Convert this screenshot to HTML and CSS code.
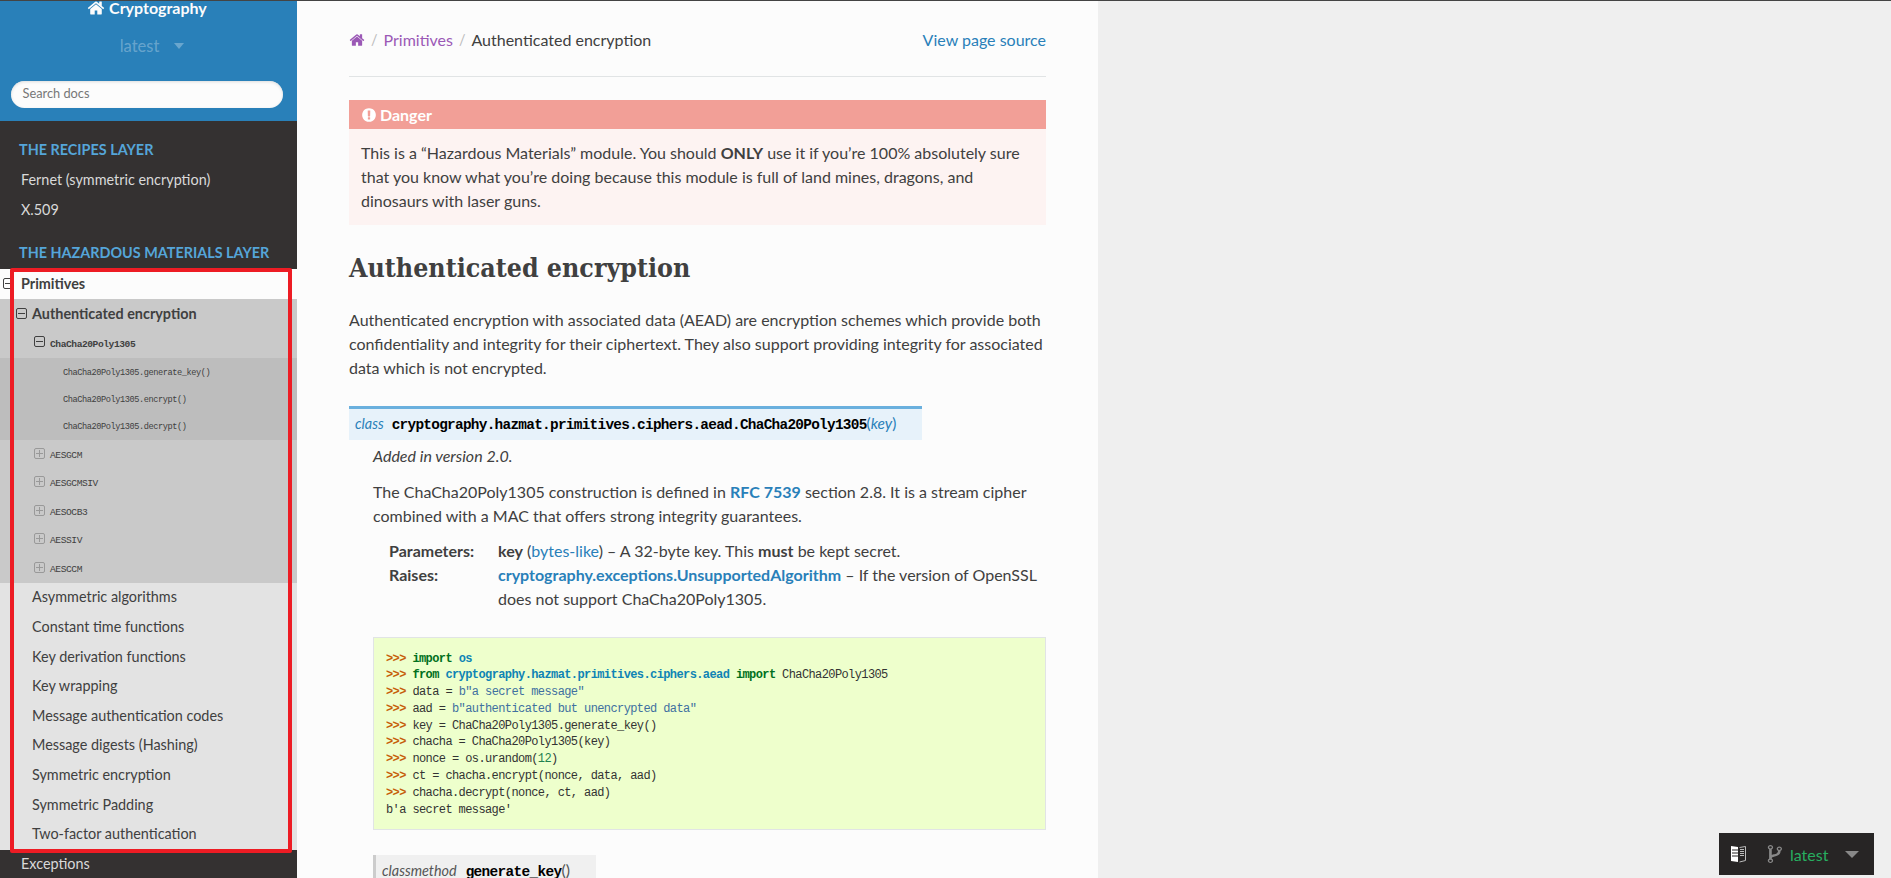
FILE: index.html
```html
<!DOCTYPE html>
<html lang="en">
<head>
<meta charset="utf-8">
<title>Authenticated encryption</title>
<link rel="stylesheet" href="styles.css">
</head>
<body>
<div class="page">
  <nav class="sidebar">
    <div class="side-top">
      <div class="brand"><svg class="home-w" viewBox="0 0 1792 1792"><path d="M1472 992v480q0 26-19 45t-45 19h-384v-384h-256v384h-384q-26 0-45-19t-19-45v-480q0-1 .5-3t.5-3l575-474 575 474q1 2 1 6zm223-69l-62 74q-8 9-21 11h-3q-13 0-21-7l-692-577-692 577q-12 8-24 7-13-2-21-11l-62-74q-8-10-7-23.500t11-21.500l719-599q32-26 76-26t76 26l244 204v-195q0-14 9-23t23-9h192q14 0 23 9t9 23v408l219 182q10 8 11 21.500t-7 23.500z"/></svg> Cryptography</div>
      <div class="ver"><span>latest</span><i class="caret"></i></div>
      <div class="search">Search docs</div>
    </div>
    <div class="cap cap-first">THE RECIPES LAYER</div>
    <a class="l1">Fernet (symmetric encryption)</a>
    <a class="l1">X.509</a>
    <div class="cap cap-second">THE HAZARDOUS MATERIALS LAYER</div>
    <div class="l1 cur"><i class="tog tog-p"></i>Primitives</div>
    <div class="l2 on"><i class="tog"></i>Authenticated encryption</div>
    <div class="l3 on3"><i class="tog"></i>ChaCha20Poly1305</div>
    <div class="l4s">
      <div class="l4">ChaCha20Poly1305.generate_key()</div>
      <div class="l4">ChaCha20Poly1305.encrypt()</div>
      <div class="l4">ChaCha20Poly1305.decrypt()</div>
    </div>
    <div class="l3s">
      <div class="l3"><i class="tog plus"></i>AESGCM</div>
      <div class="l3"><i class="tog plus"></i>AESGCMSIV</div>
      <div class="l3"><i class="tog plus"></i>AESOCB3</div>
      <div class="l3"><i class="tog plus"></i>AESSIV</div>
      <div class="l3"><i class="tog plus"></i>AESCCM</div>
    </div>
    <div class="l2s">
      <div class="l2">Asymmetric algorithms</div>
      <div class="l2">Constant time functions</div>
      <div class="l2">Key derivation functions</div>
      <div class="l2">Key wrapping</div>
      <div class="l2">Message authentication codes</div>
      <div class="l2">Message digests (Hashing)</div>
      <div class="l2">Symmetric encryption</div>
      <div class="l2">Symmetric Padding</div>
      <div class="l2">Two-factor authentication</div>
    </div>
    <a class="l1">Exceptions</a>
    <div class="mark"></div>
  </nav>
  <main class="content">
    <div class="crumbs">
      <svg class="home-p" viewBox="0 0 1792 1792"><path d="M1472 992v480q0 26-19 45t-45 19h-384v-384h-256v384h-384q-26 0-45-19t-19-45v-480q0-1 .5-3t.5-3l575-474 575 474q1 2 1 6zm223-69l-62 74q-8 9-21 11h-3q-13 0-21-7l-692-577-692 577q-12 8-24 7-13-2-21-11l-62-74q-8-10-7-23.500t11-21.500l719-599q32-26 76-26t76 26l244 204v-195q0-14 9-23t23-9h192q14 0 23 9t9 23v408l219 182q10 8 11 21.500t-7 23.500z"/></svg>
      <span class="sep">/</span><a class="visited">Primitives</a><span class="sep">/</span><span>Authenticated encryption</span>
      <a class="src">View page source</a>
    </div>
    <hr class="rule">
    <div class="danger">
      <div class="danger-t"><svg class="warn" viewBox="0 0 1792 1792"><path d="M896 128q209 0 385.500 103t279.500 279.500 103 385.500-103 385.500-279.500 279.500-385.500 103-385.500-103-279.500-279.500-103-385.500 103-385.500 279.500-279.500 385.500-103zm128 1247v-190q0-14-9-23.500t-22-9.500h-192q-13 0-23 10t-10 23v190q0 13 10 23t23 10h192q13 0 22-9.500t9-23.500zm-2-344l18-621q0-12-10-18-10-8-24-8h-220q-14 0-24 8-10 6-10 18l17 621q0 10 10 17.500t24 7.500h185q14 0 23.500-7.500t10.500-17.500z"/></svg>Danger</div>
      <p class="danger-b">This is a “Hazardous Materials” module. You should <b>ONLY</b> use it if you’re 100% absolutely sure that you know what you’re doing because this module is full of land mines, dragons, and dinosaurs with laser guns.</p>
    </div>
    <h1 class="title">Authenticated encryption</h1>
    <p class="para">Authenticated encryption with associated data (AEAD) are encryption schemes which provide both confidentiality and integrity for their ciphertext. They also support providing integrity for associated data which is not encrypted.</p>
    <div class="sig"><em>class</em><b>cryptography.hazmat.primitives.ciphers.aead.ChaCha20Poly1305</b><span class="sig-a">(<em>key</em>)</span></div>
    <div class="body">
      <p class="added"><em>Added in version 2.0.</em></p>
      <p class="para2">The ChaCha20Poly1305 construction is defined in <a class="rfc">RFC 7539</a> section 2.8. It is a stream cipher combined with a MAC that offers strong integrity guarantees.</p>
      <div class="fields">
        <div class="dt">Parameters:</div>
        <div><b>key</b> (<a class="lnk">bytes-like</a>) – A 32-byte key. This <b>must</b> be kept secret.</div>
        <div class="dt">Raises:</div>
        <div><a class="lnk-b">cryptography.exceptions.UnsupportedAlgorithm</a> – If the version of OpenSSL does not support ChaCha20Poly1305.</div>
      </div>
      <pre class="code"><span class="gp">&gt;&gt;&gt; </span><span class="kn">import</span> <span class="nn">os</span>
<span class="gp">&gt;&gt;&gt; </span><span class="kn">from</span> <span class="nn">cryptography.hazmat.primitives.ciphers.aead</span> <span class="kn">import</span> ChaCha20Poly1305
<span class="gp">&gt;&gt;&gt; </span>data = <span class="s">b"a secret message"</span>
<span class="gp">&gt;&gt;&gt; </span>aad = <span class="s">b"authenticated but unencrypted data"</span>
<span class="gp">&gt;&gt;&gt; </span>key = ChaCha20Poly1305.generate_key()
<span class="gp">&gt;&gt;&gt; </span>chacha = ChaCha20Poly1305(key)
<span class="gp">&gt;&gt;&gt; </span>nonce = os.urandom(<span class="mi">12</span>)
<span class="gp">&gt;&gt;&gt; </span>ct = chacha.encrypt(nonce, data, aad)
<span class="gp">&gt;&gt;&gt; </span>chacha.decrypt(nonce, ct, aad)
b'a secret message'</pre>
      <div class="sig2"><em>classmethod</em><b>generate_key</b>()</div>
    </div>
  </main>
</div>
<div class="versions">
  <svg class="book" viewBox="0 0 15 18"><path fill="#fff" d="M0 1l7 1v15l-7-1z"/><path fill="none" stroke="#bbb" d="M8.500 2.500l6-1v14l-6 1.500"/><path stroke="#272525" d="M1 5h6M1 8h6M1 11h6"/><path stroke="#bbb" d="M9 4.500h4M9 6.500h4M9 8.500h4M9 10.500h4"/></svg>
  <svg class="fork" viewBox="256 128 1152 1536" preserveAspectRatio="none"><path d="M672 1472q0-40-28-68t-68-28-68 28-28 68 28 68 68 28 68-28 28-68zm0-1152q0-40-28-68t-68-28-68 28-28 68 28 68 68 28 68-28 28-68zm640 128q0-40-28-68t-68-28-68 28-28 68 28 68 68 28 68-28 28-68zm96 0q0 52-26 96.500t-70 69.500q-2 287-226 414-67 38-203 81-128 40-169.500 71t-41.500 100v26q44 25 70 69.500t26 96.500q0 80-56 136t-136 56-136-56-56-136q0-52 26-96.500t70-69.500v-820q-44-25-70-69.500t-26-96.500q0-80 56-136t136-56 136 56 56 136q0 52-26 96.500t-70 69.500v497q54-26 154-57 55-17 87.500-29.500t70.500-31 59-39.500 40.500-51 28-69.500 8.500-91.500q-44-25-70-69.500t-26-96.500q0-80 56-136t136-56 136 56 56 136z"/></svg>
  <span class="v-name">latest</span>
  <i class="v-caret"></i>
</div>
</body>
</html>
```
FILE: styles.css
```css
* { box-sizing: border-box; }
html, body { margin: 0; height: 100%; overflow: hidden; }
body { background: #efefef; font-family: Lato, sans-serif; font-size: 16px; color: #404040; border-top: 1px solid #444; }
a { text-decoration: none; }
.page { display: flex; height: 877px; width: 1098px; overflow: hidden; }

.sidebar { position: relative; width: 297px; flex: none; background: #343131; overflow: hidden; font-size: 14.4px; line-height: 31px; color: #d9d9d9; }
.side-top { background: #2980b9; height: 120px; text-align: center; display: flex; flex-direction: column; align-items: center; }
.brand { font-size: 16px; font-weight: 700; color: #fcfcfc; line-height: 8px; height: 17px; margin: -2px 0 0 -3px; }
.home-w { width: 18px; height: 18px; fill: #fcfcfc; vertical-align: -3px; }
.ver { margin-top: 18px; margin-left: 7px; line-height: 24px; font-size: 16.5px; color: rgba(255,255,255,.3); width: 100%; display: flex; justify-content: center; align-items: center; gap: 15px; }
.caret { width: 0; height: 0; border: 5px solid transparent; border-top: 6px solid rgba(255,255,255,.3); border-bottom: 0; }
.search { margin-top: 23px; width: 272px; margin-left: -4px; height: 27px; background: #fcfcfc; border-radius: 14px; text-align: left; padding-left: 12px; line-height: 25px; font-size: 12.8px; color: #777; box-shadow: inset 0 1px 3px #ddd; }
.cap { font-weight: 700; color: #55a5d9; font-size: 14.4px; padding-left: 19px; height: 29.5px; }
.cap-first { margin-top: 13px; }
.cap-second { margin-top: 13px; }
.l1 { display: block; padding-left: 21px; height: 30px; }
.cur { position: relative; background: #fcfcfc; color: #404040; font-weight: 700; height: 29.500px; margin-top: 3px; line-height: 29.500px; }
.tog { position: absolute; left: 16px; width: 11px; height: 11px; border: 1px solid #404040; border-radius: 2px; margin-top: 9px; }
.tog::before { content: ""; position: absolute; left: 1px; right: 1px; top: 4px; height: 1px; background: currentColor; }
.tog-p { left: 3px; top: 0; margin-top: 9px; }
.plus { border-color: #999; color: #999; }
.plus::after { content: ""; position: absolute; top: 1px; bottom: 1px; left: 4px; width: 1px; background: #999; }

.l2, .l3, .l4 { color: #404040; }
.l2 { position: relative; padding-left: 32px; background: #e3e3e3; height: 29.600px; line-height: 27.500px; }
.l2.on { background: #c9c9c9; font-weight: 700; height: 29.500px; line-height: 29.500px; }
.l2s { background: #e3e3e3; height: 264.400px; }
.l3 { position: relative; padding-left: 50px; background: #c9c9c9; font-family: "Liberation Mono", monospace; font-size: 9.600px; letter-spacing: -.43px; height: 28.600px; line-height: 32px; }
.l3 .tog { left: 34px; margin-top: 8px; }
.on3 { font-weight: 700; height: 29.500px; line-height: 33px; }
.l4s { background: #bdbdbd; height: 82px; }
.l4 { padding-left: 63px; font-family: "Liberation Mono", monospace; font-size: 8.640px; letter-spacing: -.43px; height: 27.400px; line-height: 31px; }
.l3s { background: #c9c9c9; padding-bottom: 1px; }
.mark { position: absolute; left: 10px; top: 267px; width: 282px; height: 585px; border: 4px solid #ed1c24; border-radius: 2px; }

.content { flex: 1; background: #fcfcfc; padding: 0 52px; overflow: hidden; line-height: 24px; }
.crumbs { display: flex; align-items: center; height: 24px; margin-top: 27px; color: #404040; }
.home-p { width: 16px; height: 16px; fill: #9b59b6; }
.sep { margin: 0 6px; color: #bbb; font-size: 14.4px; }
.visited { color: #9b59b6; }
.src { margin-left: auto; color: #2980b9; }
.rule { margin: 24px 0 23px; border: 0; border-top: 1px solid #e1e4e5; height: 0; }
.danger { background: #fdf3f2; height: 125px; }
.danger-t { background: #f29f97; color: #fff; font-weight: 700; height: 29px; line-height: 29px; padding-left: 12px; display: flex; align-items: center; }
.warn { width: 16px; height: 16px; fill: #fff; margin-right: 3px; }
.danger-b { margin: 0; padding: 12px 12px 0; }
.title { margin: 25px 0 22px; font-family: "DejaVu Serif Condensed", "DejaVu Serif", serif; font-size: 26.500px; line-height: 36px; font-weight: 700; color: #404040; }
.para { margin: 0 0 26px; }
.sig { display: table; background: #e7f2fa; border-top: 3px solid #6ab0de; color: #2980b9; padding: 2px 26px 4px 6px; line-height: 24px; white-space: nowrap; }
.sig em { font-size: 14.4px; }
.sig b { font-family: "Liberation Mono", monospace; color: #000; font-size: 14.4px; letter-spacing: -.72px; margin-left: 8px; line-height: 1; }
.sig-a { font-size: 15.4px; }
.sig-a em { font-size: 15.4px; }
.body { margin-left: 24px; }
.added { margin: 4px 0 12px; }
.para2 { margin: 0 0 11px; }
.rfc { color: #2980b9; font-weight: 700; }
.fields { display: grid; grid-template-columns: 109px 1fr; margin: 0 0 26px 16px; }
.dt { font-weight: 700; }
.lnk { color: #2980b9; }
.lnk-b { color: #2980b9; font-weight: 700; }
.code { margin: 0; height: 193px; background: #eeffcc; border: 1px solid #e1e4e5; padding: 12.500px 12px 12px; font-family: "Liberation Mono", monospace; font-size: 12px; letter-spacing: -.6px; line-height: 16.800px; color: #333; overflow: hidden; }
.gp { color: #c65d09; font-weight: 700; }
.kn { color: #007020; font-weight: 700; }
.nn { color: #0e84b5; font-weight: 700; }
.s { color: #4070a0; }
.mi { color: #208050; }
.sig2 { display: table; margin-top: 25px; background: #f0f0f0; border-left: 3px solid #ccc; padding: 3px 26px 3px 6px; color: #555; line-height: 24px; white-space: nowrap; }
.sig2 em { font-size: 14.4px; }
.sig2 b { font-family: "Liberation Mono", monospace; font-size: 14.4px; letter-spacing: -.65px; color: #000; margin-left: 9px; line-height: 1; }

.versions { position: fixed; left: 1719px; top: 833px; width: 155px; height: 42px; background: #272525; display: flex; align-items: center; padding-left: 12px; }
.book { width: 15px; height: 18px; margin-right: 20px; flex: none; }
.fork { width: 16px; height: 18px; fill: #888; margin-right: 8px; flex: none; }
.v-name { color: #27ae60; font-size: 16px; }
.v-caret { margin-left: 17px; width: 0; height: 0; border: 7px solid transparent; border-top: 7px solid #888; border-bottom: 0; }
```
